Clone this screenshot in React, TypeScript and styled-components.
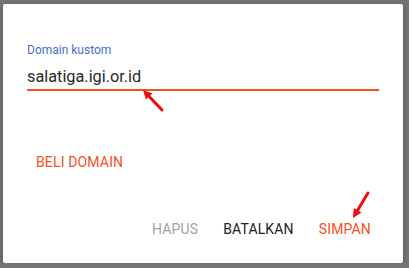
import React from 'react'
import styled, { createGlobalStyle } from 'styled-components'

const GlobalStyle = createGlobalStyle`
  html, body {
    margin: 0;
    padding: 0;
    background: #757575;
    font-family: Roboto, 'Liberation Sans', sans-serif;
  }
`

const Dialog = styled.div`
  position: relative;
  box-sizing: border-box;
  margin: 4px 0 0 3px;
  width: 400px;
  height: 259px;
  background: #fff;
  border-radius: 2px;
  box-shadow: 0 2px 6px rgba(0, 0, 0, 0.3);
  display: flex;
  flex-direction: column;
  padding: 38px 24px 16px 24px;
`

const Field = styled.div`
  display: flex;
  flex-direction: column;
`

const Label = styled.label`
  font-size: 12px;
  line-height: 16px;
  color: #4670c8;
`

const Input = styled.div`
  margin-top: 9px;
  font-size: 16.3px;
  line-height: 20px;
  color: #2a2a2a;
  padding-bottom: 2px;
  border-bottom: 2px solid #f4511e;
`

type BtnProps = { $tone: 'accent' | 'muted' | 'dark' }

const TextButton = styled.button<BtnProps>`
  border: none;
  background: none;
  padding: 0 8px;
  height: 36px;
  line-height: 36px;
  font-family: Roboto, 'Liberation Sans', sans-serif;
  font-size: 14px;
  font-weight: 400;
  letter-spacing: 0.15px;
  text-transform: uppercase;
  cursor: pointer;
  color: ${p => (p.$tone === 'accent' ? '#f4511e' : p.$tone === 'muted' ? '#a3a3a3' : '#212121')};
`

const BuyRow = styled.div`
  margin-top: 53px;
  padding-left: 1px;
`

const Actions = styled.div`
  margin-top: auto;
  display: flex;
  justify-content: flex-end;
  gap: 9px;
  padding-right: 0;
`

const Annot = styled.svg`
  position: absolute;
  left: -3px;
  top: -4px;
  pointer-events: none;
`

function Arrow({ x1, y1, x2, y2 }: { x1: number; y1: number; x2: number; y2: number }) {
  // tail (x1,y1) -> tip (x2,y2)
  const dx = x2 - x1
  const dy = y2 - y1
  const len = Math.hypot(dx, dy)
  const ux = dx / len
  const uy = dy / len
  const hl = 9
  const hw = 4.5
  const bx = x2 - ux * hl
  const by = y2 - uy * hl
  const pts = `${x2},${y2} ${bx - uy * hw},${by + ux * hw} ${bx + uy * hw},${by - ux * hw}`
  return (
    <g>
      <line x1={x1} y1={y1} x2={bx} y2={by} stroke="#e8100c" strokeWidth={3} strokeLinecap="round" />
      <polygon points={pts} fill="#e8100c" />
    </g>
  )
}

export default function App() {
  return (
    <>
      <GlobalStyle />
      <Dialog>
        <Field>
          <Label>Domain kustom</Label>
          <Input>salatiga.igi.or.id</Input>
        </Field>
        <BuyRow>
          <TextButton $tone="accent">Beli Domain</TextButton>
        </BuyRow>
        <Actions>
          <TextButton $tone="muted">Hapus</TextButton>
          <TextButton $tone="dark">Batalkan</TextButton>
          <TextButton $tone="accent">Simpan</TextButton>
        </Actions>
        <Annot width={409} height={268}>
          <Arrow x1={162} y1={110} x2={143} y2={90} />
          <Arrow x1={368} y1={193} x2={353} y2={218} />
        </Annot>
      </Dialog>
    </>
  )
}
